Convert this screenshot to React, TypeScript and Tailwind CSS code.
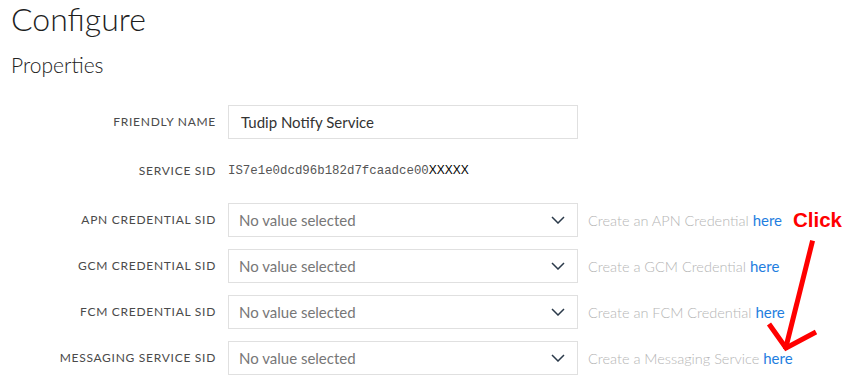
import React from 'react';

const selectRows = [
  { label: 'APN Credential SID', help: 'Create an APN Credential' },
  { label: 'GCM Credential SID', help: 'Create a GCM Credential' },
  { label: 'FCM Credential SID', help: 'Create an FCM Credential' },
  { label: 'Messaging Service SID', help: 'Create a Messaging Service' },
];

const Label: React.FC<{ text: string }> = ({ text }) => (
  <div className="w-[216px] shrink-0 text-right text-[12px] uppercase tracking-[0.06em] text-[#4a4a4a] font-normal">
    {text}
  </div>
);

const Chevron = () => (
  <svg width="14" height="8" viewBox="0 0 14 8" fill="none">
    <path d="M1 1l6 6 6-6" stroke="#2b3a4a" strokeWidth="1.5" />
  </svg>
);

const App: React.FC = () => {
  return (
    <div className="relative w-[859px] h-[386px] overflow-hidden bg-white text-[#333]" style={{ fontFamily: 'Lato, "Open Sans", sans-serif' }}>
      <div className="pl-[11px]">
        <h1 className="text-[32px] leading-[38px] font-light text-[#1e1e1e]">Configure</h1>
        <h2 className="mt-[14px] text-[21px] leading-[26px] font-light text-[#222]">Properties</h2>
      </div>

      <div className="mt-[27px] flex flex-col gap-3">
        {/* friendly name */}
        <div className="flex items-center gap-3">
          <Label text="Friendly Name" />
          <div className="w-[350px] h-[34px] border border-[#e0e0e0] flex items-center px-3 text-[15px] text-[#333]">
            Tudip Notify Service
          </div>
        </div>

        {/* service sid */}
        <div className="flex items-center gap-3 h-[40px]">
          <Label text="Service SID" />
          <div className="flex items-baseline">
            <span className="text-[12.4px] text-[#555]" style={{ fontFamily: '"Liberation Mono", monospace' }}>
              IS7e1e0dcd96b182d7fcaadce00
            </span>
            <span className="text-[12px] text-black" style={{ fontFamily: '"Liberation Sans", Arial, sans-serif' }}>
              XXXXX
            </span>
          </div>
        </div>

        {selectRows.map((row) => (
          <div key={row.label} className="flex items-center gap-3">
            <Label text={row.label} />
            <div className="w-[350px] h-[34px] border border-[#e0e0e0] flex items-center justify-between pl-[10px] pr-[12px] text-[15px] text-[#777]">
              <span>No value selected</span>
              <Chevron />
            </div>
            <div className="ml-[-2px] text-[14.5px] text-[#b5b5b5] font-light">
              {row.help} <span className="text-[#1f7ee0] font-normal text-[15px]">here</span>
            </div>
          </div>
        ))}
      </div>

      {/* annotation */}
      <div
        className="absolute left-[793px] top-[205px] text-[20.5px] font-bold text-[#ff0000]"
        style={{ fontFamily: '"Liberation Sans", Arial, sans-serif' }}
      >
        Click
      </div>
      <svg className="absolute left-0 top-0" width="859" height="386" viewBox="0 0 859 386" fill="none">
        <path d="M812 243 L786 347" stroke="#ff0000" strokeWidth="5" strokeLinecap="square" />
        <path d="M769 324 L786 348 L816 332" stroke="#ff0000" strokeWidth="5" strokeLinejoin="miter" />
      </svg>
    </div>
  );
};

export default App;
